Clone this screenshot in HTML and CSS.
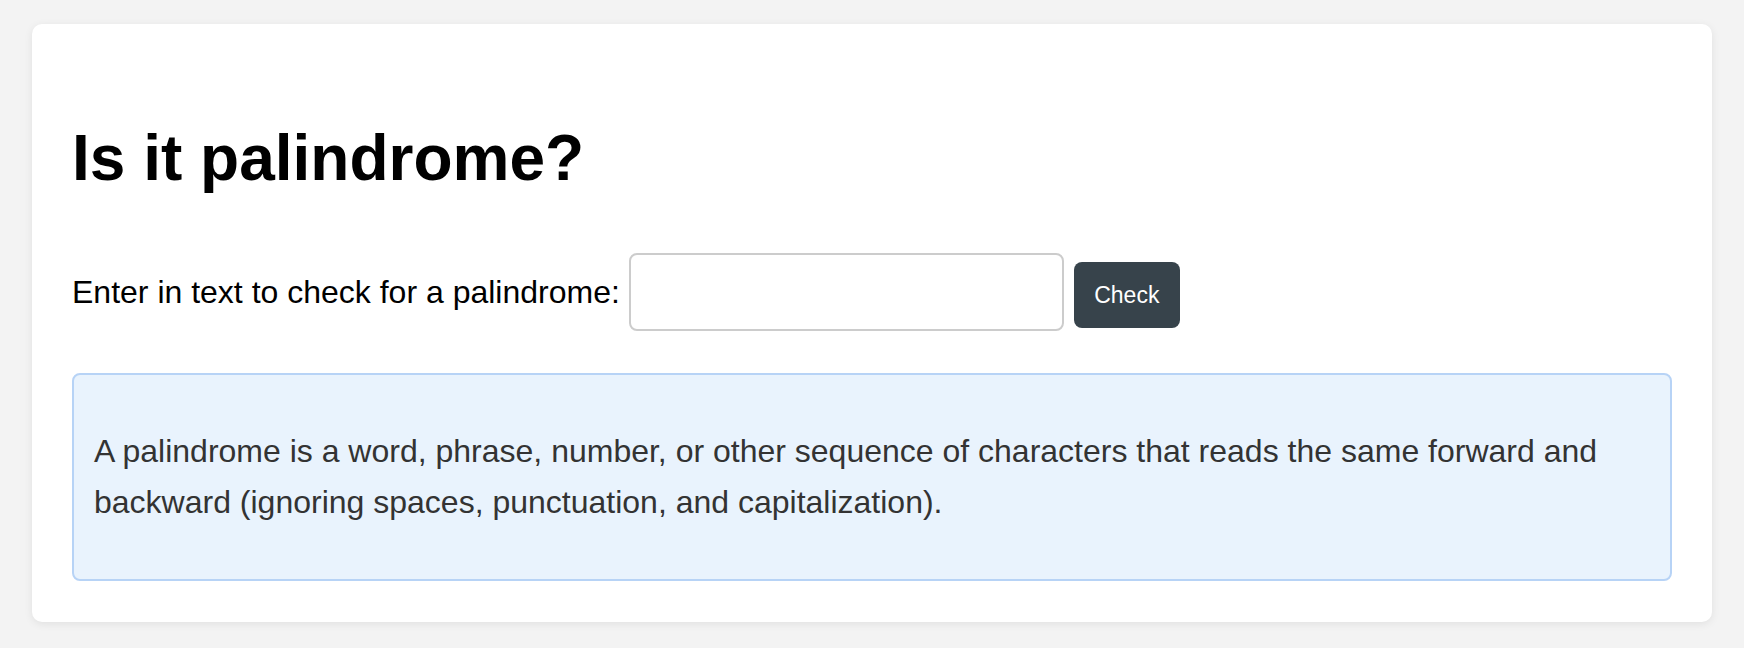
FILE: index.html
```html
<!DOCTYPE html>
<html lang="en">
<head>
<meta charset="utf-8">
<title>Is it palindrome?</title>
<link rel="stylesheet" href="styles.css">
</head>
<body>
<main class="card">
  <h1 class="title">Is it palindrome?</h1>
  <div class="form-row">
    <label class="form-label" for="text-input">Enter in text to check for a palindrome:</label>
    <input class="text-input" id="text-input" type="text">
    <button class="check-btn" type="button">Check</button>
  </div>
  <div class="info-box">
    <p class="info-text">A palindrome is a word, phrase, number, or other sequence of characters that reads the same forward and backward (ignoring spaces, punctuation, and capitalization).</p>
  </div>
</main>
</body>
</html>
```

FILE: styles.css
```css
* { box-sizing: border-box; }

html, body {
  margin: 0;
  padding: 0;
}

body {
  background: #f3f3f3;
  font-family: "Liberation Sans", Arial, Helvetica, sans-serif;
  color: #000;
  padding: 24px 32px 28px;
}

.card {
  background: #fff;
  border-radius: 10px;
  box-shadow: 0 2px 8px rgba(0, 0, 0, 0.08);
  padding: 40px 40px 41px;
}

.title {
  font-size: 64px;
  font-weight: 700;
  line-height: 74px;
  margin: 57px 0 58px;
}

.form-row {
  display: flex;
  align-items: center;
  margin-bottom: 42px;
}

.form-label {
  font-size: 32px;
  line-height: 37px;
  margin-right: 9px;
}

.text-input {
  width: 435px;
  height: 78px;
  border: 2px solid #cccccc;
  border-radius: 8px;
  background: #fff;
  font-size: 32px;
  font-family: inherit;
  padding: 0 14px;
  margin-right: 10px;
  outline: none;
}

.check-btn {
  width: 106px;
  height: 66px;
  margin-top: 6px;
  background: #37434b;
  color: #fff;
  border: none;
  border-radius: 8px;
  font-family: inherit;
  font-size: 23px;
  padding: 0;
}

.info-box {
  background: #e9f3fd;
  border: 2px solid #b7d3f6;
  border-radius: 8px;
  padding: 18px 20px;
}

.info-text {
  margin: 33px 0;
  font-size: 32px;
  line-height: 51.2px;
  color: #333;
}
```
